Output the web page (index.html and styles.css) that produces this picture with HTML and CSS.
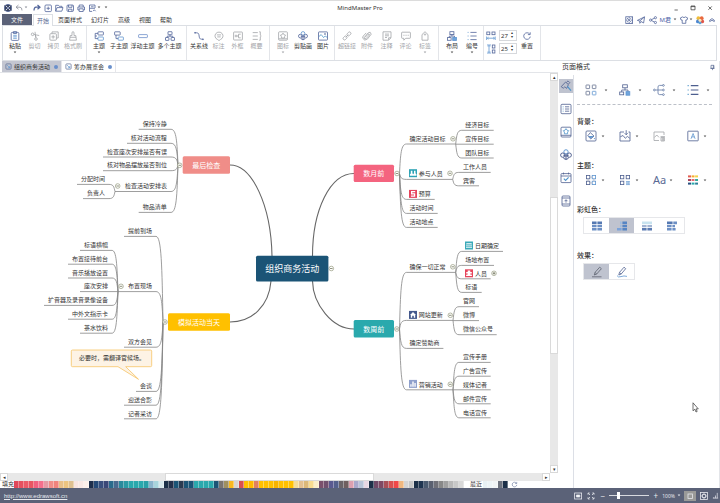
FILE: index.html
```html
<!DOCTYPE html>
<html lang="zh-CN">
<head>
<meta charset="utf-8">
<title>MindMaster Pro</title>
<link rel="stylesheet" href="styles.css">
</head>
<body>
<svg class="sprite" aria-hidden="true">
  <symbol id="logo" viewBox="0 0 10 10"><circle cx="5" cy="5" r="3.6" fill="#39435c"/><path d="M3 3L7 7M7 3L3 7" stroke="#fff" stroke-width=".8"/><circle cx="5" cy="5" r="1" fill="#fff"/><path d="M1 2.5l1 .8M9 2.5l-1 .8M1 7.5l1-.8M9 7.5l-1-.8" stroke="#39435c"/></symbol>
  <symbol id="undo" viewBox="0 0 10 10"><path d="M4.5 2L2 4.2 4.5 6.2M2 4.2H6Q8 4.2 8 7.5"/></symbol>
  <symbol id="redo" viewBox="0 0 10 10"><path d="M5.5 2L8 4.2 5.5 6.2M8 4.2H4Q2 4.2 2 7.5" stroke-width="1.2"/></symbol>
  <symbol id="new" viewBox="0 0 10 10"><rect x="2" y="2" width="6.4" height="6.6" rx="1"/><path d="M5.2 3.6V7M3.5 5.3H6.9"/></symbol>
  <symbol id="open" viewBox="0 0 10 10"><path d="M1.7 8.2V2.3H4.4L5.2 3.3H8V4.6M1.7 8.2L3 4.6H9L7.8 8.2Z"/></symbol>
  <symbol id="save" viewBox="0 0 10 10"><rect x="2" y="2" width="6.5" height="6.4" rx="1"/><path d="M3.5 2V4.3H7V2M3.5 8.4V6.2H7V8.4"/></symbol>
  <symbol id="print" viewBox="0 0 10 10"><path d="M3.2 4V2H7.2V4M3 7H1.9V4H8.5V7H7.4M3.2 5.8H7.2V8.5H3.2Z"/></symbol>
  <symbol id="export" viewBox="0 0 10 10"><path d="M8 5V2H2.5V8.4H5M4 3.8H6.6M2.5 5.3H8M6 8.2L7.3 6.8 8.6 8.2"/></symbol>
  <symbol id="paste" viewBox="0 0 10 10"><rect x="1.2" y="1.4" width="7.6" height="8" rx="1"/><path d="M3.4 .7H6.6V2.4H3.4Z" fill="#9db7dd"/><path d="M3.2 4.3H6.8M3.2 5.8H6.8M3.2 7.3H6.8" stroke="#5f95cf"/></symbol>
  <symbol id="cut" viewBox="0 0 10 10"><circle cx="2.6" cy="3.3" r="1.3"/><circle cx="6" cy="8" r="1.3"/><path d="M3.9 3.5L9.2 4.5M5.8 6.7L5 .8M5.4 4L5.8 6"/></symbol>
  <symbol id="copy" viewBox="0 0 10 10"><path d="M3 2.6V.9H9.2V7H7.6"/><rect x=".9" y="2.7" width="6.5" height="6.5" rx=".8"/><path d="M4.1 4.2V7.7M2.4 5.9H5.9"/></symbol>
  <symbol id="brush" viewBox="0 0 10 10"><path d="M4 4.6V1.3Q5 0 6 1.3V4.6H7.8L8.4 9.2H1.6L2.2 4.6ZM2 6.3H8"/></symbol>
  <symbol id="topic" viewBox="0 0 10 10"><rect x="4" y=".8" width="5.4" height="3.2" rx=".5"/><rect x="4" y="6" width="5.4" height="3.2" rx=".5" stroke="#5f95cf"/><path d="M4 2.4H1.2V7.6H4M1.2 5H3"/></symbol>
  <symbol id="subtopic" viewBox="0 0 10 10"><rect x=".6" y=".8" width="5.6" height="3.3" rx=".5"/><rect x="4.2" y="6" width="5.2" height="3.2" rx=".5" stroke="#5f95cf"/><path d="M2 4.1V7.6H4.2"/></symbol>
  <symbol id="floating" viewBox="0 0 10 10"><rect x=".6" y="3.6" width="8.8" height="3" rx=".6" stroke="#6f8fc9"/></symbol>
  <symbol id="multi" viewBox="0 0 10 10"><rect x="3" y=".7" width="4" height="3" rx=".3"/><rect x=".5" y="6.5" width="3.4" height="2.9" rx=".3"/><rect x="6.1" y="6.5" width="3.4" height="2.9" rx=".3"/><path d="M5 3.7V5.2M2.2 6.5V5.2H7.8V6.5"/></symbol>
  <symbol id="relation" viewBox="0 0 10 10"><path d="M1 1.8H2.7C6.8 1.8 3.5 8.2 7.5 8.2H9"/><circle cx="1" cy="1.8" r=".5"/><circle cx="9" cy="8.3" r=".5"/></symbol>
  <symbol id="callout" viewBox="0 0 10 10"><path d="M3.4 8.4A4 3.8 0 1 1 6.6 8.4L5 9.6Z"/><path d="M2.9 3.9H7.1M3.3 5.9H6.7"/></symbol>
  <symbol id="boundary" viewBox="0 0 10 10"><rect x=".6" y="1" width="8.8" height="8" rx=".6"/><path d="M7.7 3.2H5.5V6.8H7.7M5.5 5H4"/><circle cx="3" cy="5" r=".9"/></symbol>
  <symbol id="summary" viewBox="0 0 10 10"><path d="M.7 1.6H5.8M.7 5H5.8M.7 8.4H5.8M7.2 .8H8.3V4.2L9.2 5 8.3 5.8V9.2H7.2"/></symbol>
  <symbol id="mark" viewBox="0 0 10 10"><rect x=".6" y=".8" width="8.8" height="8.4" rx=".8"/><path d="M5 2.1L6 3.8 7.6 4.2 6.6 5.6 6.6 7H3.4L3.4 5.6 2.4 4.2 4 3.8ZM.8 7.8H9.2"/></symbol>
  <symbol id="clip" viewBox="0 0 10 10"><circle cx="5" cy="2.4" r="1.8" stroke="#5f95cf"/><circle cx="2.3" cy="5.1" r="1.8"/><circle cx="7.7" cy="5.1" r="1.8"/><path d="M5 3.8V9.2M5 6L2.7 5.1M5 6L7.3 5.1M5 8.5Q3 8.8 3 7M5 8.5Q7 8.8 7 7"/></symbol>
  <symbol id="picture" viewBox="0 0 10 10"><rect x=".5" y=".9" width="9" height="8.2" rx=".6"/><path d="M.8 5.6L3.2 3.6 5.6 6.6 7.2 5 9.2 6.4" stroke="#4f94c9"/><circle cx="7" cy="3" r=".5"/></symbol>
  <symbol id="link" viewBox="0 0 10 10"><rect x="4.8" y="1.5" width="4.3" height="2.8" rx="1.3" transform="rotate(-45 7 2.9)"/><rect x=".9" y="5.6" width="4.3" height="2.8" rx="1.3" transform="rotate(-45 3 7)"/><path d="M3.6 6.4L6.4 3.6"/></symbol>
  <symbol id="attach" viewBox="0 0 10 10"><path d="M3 6.4L6.2 3.2Q7.4 2.4 7.4 4L4.2 7.5Q2.2 8.8 2 6.8L6 2Q8.6-.2 9.2 3.2L5.4 8.1Q2.4 10.5.8 7.3Q.4 6 1.3 5L4.2 1.9"/></symbol>
  <symbol id="note" viewBox="0 0 10 10"><path d="M1 .8H9V6.8L6.6 9.2H1ZM3 3.1H7M3 4.8H7M3 6.5H5M6.6 9V6.8H9"/></symbol>
  <symbol id="comment" viewBox="0 0 10 10"><path d="M1.2 1.2H8.8Q9.4 1.2 9.4 2V6.6Q9.4 7.3 8.8 7.3H4.8L2.8 9.2V7.3H1.2Q.6 7.3.6 6.6V2Q.6 1.2 1.2 1.2Z"/><path d="M2.5 4.3H3.4M4.6 4.3H5.5M6.7 4.3H7.6" stroke-width="1.1"/></symbol>
  <symbol id="tag" viewBox="0 0 10 10"><path d="M2 9.2V3.6L5 .7 8 3.6V9.2Z"/><circle cx="5" cy="3.5" r=".7"/></symbol>
  <symbol id="layout" viewBox="0 0 10 10"><rect x="2.9" y=".7" width="4" height="2.9"/><rect x=".5" y="6.6" width="3.6" height="2.7"/><path d="M4.9 3.6V5.1M2.3 6.6V5.1H7.5V6.6"/><rect x="5.7" y="6.4" width="3.7" height="3.1" fill="#6fa4dc" stroke="#5f95cf"/></symbol>
  <symbol id="number" viewBox="0 0 10 10"><path d="M3.4 1.4H9.6M3.4 5H9.6M3.4 8.6H9.6"/><path d="M.6 1.4H1.6M.6 5H1.6M.6 8.6H1.6" stroke="#5f95cf"/></symbol>
  <symbol id="hgap" viewBox="0 0 10 10"><rect x=".8" y="1" width="3" height="2.7"/><rect x="6" y="1" width="3" height="2.7"/><path d="M.6 5.5V9M9.2 5.5V9M1.3 7.2H8.5M2.5 6.2L1.3 7.2 2.5 8.2M7.3 6.2L8.5 7.2 7.3 8.2" stroke="#5f95cf"/></symbol>
  <symbol id="vgap" viewBox="0 0 10 10"><path d="M1 1H5M1 9H5M3 1.5V8.5M2 2.6L3 1.5 4 2.6M2 7.4L3 8.5 4 7.4" stroke="#5f95cf"/><rect x="6.3" y="1" width="2.6" height="3"/><rect x="6.3" y="6" width="2.6" height="3"/></symbol>
  <symbol id="reset" viewBox="0 0 10 10"><path d="M7.7 3.1A3.3 3.3 0 1 0 8.3 5.6M8.2 1.3V3.6H5.9"/></symbol>
  <symbol id="down" viewBox="0 0 4 3"><path d="M.7 .6H3.3L2 2.3Z" fill="currentColor" stroke="none"/></symbol>
  <symbol id="grid" viewBox="0 0 12 12"><g stroke="#65718f"><rect x="1" y="1" width="3.6" height="3.6" rx=".4"/><rect x="7.3" y="1" width="3.6" height="3.6" rx=".4"/><rect x="1" y="7.3" width="3.6" height="3.6" rx=".4"/></g><rect x="7.3" y="7.3" width="3.6" height="3.6" rx=".4" stroke="#5f95cf"/></symbol>
  <symbol id="theme" viewBox="0 0 12 12"><rect x="1.4" y="1.4" width="3.4" height="3.4"/><rect x="7.2" y="1.4" width="3.4" height="3.4" stroke="#5f95cf"/><rect x="1.4" y="7.2" width="3.4" height="3.4"/><rect x="7.2" y="7.2" width="3.4" height="3.4" stroke="#5f95cf"/><path d="M3.1 4.8V7.2M4.8 3.1H7.2M4.8 8.9H7.2M8.9 4.8V7.2" stroke="#a6adbf"/></symbol>
  <symbol id="theme2" viewBox="0 0 12 12"><rect x="1.4" y="1.4" width="3.4" height="3.4"/><rect x="7.2" y="1.4" width="3.4" height="3.4"/><rect x="1.4" y="7.2" width="3.4" height="3.4"/><path d="M7 7.6H11M7 9.1H11M7 10.6H11M8 7V11M9.8 7V11" stroke="#5f95cf" stroke-width=".6"/></symbol>
  <symbol id="tree" viewBox="0 0 12 12"><rect x="3.7" y=".8" width="4.6" height="3"/><rect x=".7" y="8" width="4" height="2.8"/><path d="M6 3.8V6M2.7 8V6H9V7.6"/><rect x="7" y="7.6" width="3.8" height="3.6" fill="#6fa4dc" stroke="#5f95cf"/></symbol>
  <symbol id="branch" viewBox="0 0 12 12"><g stroke="#6278a4"><circle cx="1.4" cy="6" r=".9"/><path d="M2.3 6H9.4M9.4 1.4H6.5Q5 1.4 5 3V9Q5 10.6 6.5 10.6H9.4"/><circle cx="10.4" cy="1.4" r=".9"/><circle cx="10.4" cy="6" r=".9"/><circle cx="10.4" cy="10.6" r=".9"/></g></symbol>
  <symbol id="bullets" viewBox="0 0 12 12"><path d="M3.8 1.6H11.4M3.8 6H11.4M3.8 10.4H11.4" stroke-width="1.1"/><path d="M.6 1.6H1.7M.6 6H1.7M.6 10.4H1.7" stroke="#4f94c9" stroke-width="1.2"/></symbol>
  <symbol id="fill" viewBox="0 0 12 12"><rect x="1" y="1" width="10" height="10" rx="1"/><path d="M5.3 2.6L9 6.1 5.8 8.9 2.7 5.9Z"/><path d="M3.2 6H8.8L5.8 8.6Z" fill="#5f95cf" stroke="none"/><circle cx="9.4" cy="8.6" r=".6" fill="#5f95cf" stroke="none"/></symbol>
  <symbol id="bgimage" viewBox="0 0 12 12"><path d="M5 2H1V11H11V2H9.5M1.3 6.8L4 5.5 6.3 8.3 8.3 6.4 10.7 8.2"/><path d="M7.2 .2V4.6M5.7 3.2L7.2 4.8 8.7 3.2"/></symbol>
  <symbol id="bgremove" viewBox="0 0 12 12"><path d="M11 5V2H1V10.5H6M1.3 7.5L3.8 5 6 7.4M7.5 6.7H12M8 7.3H11.4V11H8ZM9.3 7.5V10.8M10.4 7.5V10.8"/></symbol>
  <symbol id="watermark" viewBox="0 0 12 12"><rect x=".8" y="1.2" width="10.4" height="9.6" rx=".4"/><path d="M4 8.8L6.1 3.5 8.1 8.8M4.8 6.9H7.4" stroke="#5f95cf"/></symbol>
  <symbol id="palette" viewBox="0 0 12 12"><g stroke="none"><path d="M1 1.4H4V3.4H1Z" fill="#e45e50"/><path d="M4.6 1.4H7.5V3.4H4.6Z" fill="#f7ab2c"/><path d="M8.1 1.4H11V3.4H8.1Z" fill="#f2d348"/><path d="M1 5H4V7H1Z" fill="#a8455e"/><path d="M4.6 5H7.5V7H4.6Z" fill="#ea6a72"/><path d="M8.1 5H11V7H8.1Z" fill="#35a99b"/><path d="M1 8.6H4V10.6H1Z" fill="#285180"/><path d="M4.6 8.6H7.5V10.6H4.6Z" fill="#2aa9ad"/><path d="M8.1 8.6H11V10.6H8.1Z" fill="#2b7f99"/></g></symbol>
  <symbol id="roller" viewBox="0 0 12 12"><path d="M1.2 6.7L5.6 2 8.4 4.6 6.7 8.4 4.8 6.8 3.3 8.2ZM6.5 2.3L8 .9 9.8 2.7 8.3 4.2"/><path d="M7.4 6.3L11 10.6" stroke="#4f94c9" stroke-width="1.3"/></symbol>
  <symbol id="outline" viewBox="0 0 12 12"><rect x="1" y="1.3" width="10" height="9.4" rx="1"/><path d="M5 3.8H9.2M5 6H9.2M5 8.2H9.2"/><path d="M2.7 3.8H3.6M2.7 6H3.6M2.7 8.2H3.6" stroke="#4f94c9"/></symbol>
  <symbol id="starbox" viewBox="0 0 12 12"><rect x="1" y="1.2" width="10" height="9.8" rx="1"/><path d="M1 9.3H11"/><path d="M6 2.6L7 4.2 8.7 4.7 7.6 6 7.6 7.8H4.4L4.4 6 3.3 4.7 5 4.2Z" stroke="#4f94c9"/></symbol>
  <symbol id="calendar" viewBox="0 0 12 12"><rect x="1" y="1.6" width="10" height="9" rx=".8"/><path d="M1 4H11M3.5 .6V2.4M8.5 .6V2.4"/><path d="M3.8 6.7L5.6 8.5 8.6 5.3" stroke="#4f94c9" stroke-width="1.1"/></symbol>
  <symbol id="history" viewBox="0 0 12 12"><rect x="2" y="1" width="8" height="10" rx="1"/><path d="M2 3H10M2 9H10M4.5 6.2L6 4.7 7.5 6.2M6 5V7.6"/></symbol>
  <symbol id="rb1" viewBox="0 0 12 12"><g stroke="none" fill="#6c8fc4"><path d="M1 1.5H5.6V4.2H1ZM6.4 1.5H11V4.2H6.4Z" fill="#5579b2"/><path d="M1 4.9H5.6V7.3H1ZM6.4 4.9H11V7.3H6.4ZM1 8H5.6V10.5H1ZM6.4 8H11V10.5H6.4Z"/></g></symbol>
  <symbol id="rb2" viewBox="0 0 12 12"><g stroke="none"><path d="M1 8H5.6V10.5H1Z" fill="#7ba3da"/><path d="M4 1.5H5.6V4.2H4ZM4 4.9H5.6V7.3H4Z" fill="#9cbbe0"/><path d="M6.4 1.5H11V4.2H6.4ZM6.4 4.9H11V7.3H6.4ZM6.4 8H11V10.5H6.4Z" fill="#5585c4"/></g></symbol>
  <symbol id="rb3" viewBox="0 0 12 12"><g stroke="none"><path d="M1 1.5H11V4.2H1Z" fill="#c8e3ef"/><path d="M1 4.9H5.6V7.3H1ZM6.4 4.9H11V7.3H6.4Z" fill="#a2b4d2"/><path d="M1 8H5.6V10.5H1ZM6.4 8H11V10.5H6.4Z" fill="#5b7bb2"/></g></symbol>
  <symbol id="rb4" viewBox="0 0 12 12"><g stroke="none" fill="#6c8fc4"><path d="M1 1.5H6.6V4.2H1Z" fill="#5579b2"/><path d="M7.3 1.5H11V4.2H7.3ZM1 4.9H5.6V7.3H1ZM6.4 4.9H9V7.3H6.4Z"/><path d="M1 8H5.6V10.5H1ZM6.4 8H9.6V10.5H6.4Z"/></g></symbol>
  <symbol id="pen" viewBox="0 0 12 12"><path d="M3.3 9L4 6.4 8.7 1.2 10.4 2.7 5.7 8ZM4 6.4L5.7 8" stroke="#5d6270"/><path d="M1 10.8H10.5" stroke="#5d6270"/></symbol>
  <symbol id="pencil" viewBox="0 0 12 12"><path d="M2.8 9L3.5 6.4 8 1.2 9.7 2.7 5.2 8ZM3.5 6.4L5.2 8"/><path d="M1 9.6Q2 11.8 5 10.6T11 10.4" stroke="#5f95cf"/></symbol>
  <symbol id="full" viewBox="0 0 10 10"><rect x="1.8" y="1.8" width="6.8" height="6.6"/><path d="M3 3L7.4 7.2M7.4 3L3 7.2M5.2 2V3.5M5.2 6.8V8.4M2 5.1H3.5M7 5.1H8.6"/></symbol>
  <symbol id="send" viewBox="0 0 10 10"><path d="M1.4 5.4L8.6 1.8 7.6 8 5 6.5 3.8 8.3V6L8.2 2.2M1.4 5.4L3.8 6"/></symbol>
  <symbol id="share" viewBox="0 0 10 10"><circle cx="2.6" cy="5.1" r="1.1"/><circle cx="7.4" cy="2.7" r="1.1"/><circle cx="7.4" cy="7.5" r="1.1"/><path d="M3.6 4.6L6.4 3.2M3.6 5.6L6.4 7"/></symbol>
  <symbol id="shirt" viewBox="0 0 10 10"><path d="M3.6 1.9L1.4 2.9 2 5H3.2V8.3H6.8V5H8L8.6 2.9 6.4 1.9Q5 3.4 3.6 1.9Z"/></symbol>
  <symbol id="flower" viewBox="0 0 10 10"><g stroke="none"><circle cx="3.4" cy="3.2" r="1.9" fill="#f0bd3a"/><circle cx="6.7" cy="3.2" r="1.9" fill="#ea6a3d"/><circle cx="2.9" cy="6.4" r="1.9" fill="#4d86d0"/><circle cx="7.2" cy="6.4" r="1.9" fill="#e2574a"/><circle cx="5" cy="7.8" r="1.5" fill="#61a5d8"/><circle cx="5" cy="5.2" r="1.5" fill="#fbe8ba"/></g></symbol>
  <symbol id="chev" viewBox="0 0 10 10"><path d="M2.7 6.5V5.2L5 3.6 7.3 5.2V6.5L5 5.3Z"/></symbol>
  <symbol id="min" viewBox="0 0 10 10"><path d="M3.5 7H6.8"/></symbol>
  <symbol id="max" viewBox="0 0 10 10"><path d="M3 3H7V6.8H3ZM3 3.6H7"/></symbol>
  <symbol id="close" viewBox="0 0 10 10"><path d="M3.4 3.4L6.8 6.8M6.8 3.4L3.4 6.8"/></symbol>
  <symbol id="doc" viewBox="0 0 8 8"><rect x="1" y="1" width="6" height="6" rx="1"/><path d="M2.2 2.3L5.4 5.5M5.4 3.4V5.5H3.2" stroke="#5f95cf"/></symbol>
  <symbol id="pin" viewBox="0 0 8 8"><path d="M2.3 1.5H5.6V5H2.3ZM5 1.5V5M1.5 5H6.3M4 5V7"/></symbol>
  <symbol id="slide" viewBox="0 0 10 10"><rect x="1.6" y="2" width="7" height="6"/><path d="M3.4 4H6.8V6H3.4Z" fill="#fff"/></symbol>
  <symbol id="expand" viewBox="0 0 10 10"><path d="M2 3.7V2H3.7M6.3 2H8V3.7M8 6.3V8H6.3M3.7 8H2V6.3M2.2 2.2L4 4M7.8 2.2L6 4M2.2 7.8L4 6M7.8 7.8L6 6"/></symbol>
  <symbol id="page" viewBox="0 0 10 10"><rect x="3" y="3" width="4.4" height="4.4"/></symbol>
  <symbol id="fit" viewBox="0 0 10 10"><rect x="1.5" y="1.5" width="7" height="7"/><path d="M5 1.5V8.5M1.5 5H8.5"/><rect x="3.4" y="3.6" width="3.2" height="2.8" fill="#5b6278"/></symbol>
  <symbol id="grip" viewBox="0 0 8 8"><path d="M6 1V7M4 4V7M2 6V7M1 7H7"/></symbol>
</svg>

<div class="app">
  <header>
    <div class="titlebar">
      <div class="quick">
        <svg class="ic"><use href="#logo"/></svg>
        <button class="mini" aria-label="撤销"><svg class="ic gray"><use href="#undo"/></svg></button>
        <svg class="dd gray"><use href="#down"/></svg>
        <button class="mini" aria-label="重做"><svg class="ic"><use href="#redo"/></svg></button>
        <button class="mini" aria-label="新建"><svg class="ic"><use href="#new"/></svg></button>
        <button class="mini" aria-label="打开"><svg class="ic"><use href="#open"/></svg></button>
        <button class="mini" aria-label="保存"><svg class="ic"><use href="#save"/></svg></button>
        <button class="mini" aria-label="打印"><svg class="ic"><use href="#print"/></svg></button>
        <button class="mini" aria-label="导出"><svg class="ic"><use href="#export"/></svg></button>
        <svg class="dd"><use href="#down"/></svg>
        <svg class="dd"><use href="#down"/></svg>
      </div>
      <h1>MindMaster Pro</h1>
      <div class="winctl">
        <button aria-label="最小化"><svg class="ic dark"><use href="#min"/></svg></button>
        <button aria-label="最大化"><svg class="ic dark"><use href="#max"/></svg></button>
        <button aria-label="关闭"><svg class="ic dark"><use href="#close"/></svg></button>
      </div>
    </div>
    <div class="menubar">
      <nav>
        <button class="file">文件</button>
        <button class="current">开始</button>
        <button>页面样式</button>
        <button>幻灯片</button>
        <button>高级</button>
        <button>视图</button>
        <button>帮助</button>
      </nav>
      <div class="account">
        <button aria-label="全屏"><svg class="ic"><use href="#full"/></svg></button>
        <button aria-label="发送"><svg class="ic"><use href="#send"/></svg></button>
        <button aria-label="分享"><svg class="ic"><use href="#share"/></svg></button>
        <button class="user">M君<svg class="dd"><use href="#down"/></svg></button>
        <button aria-label="皮肤"><svg class="ic"><use href="#shirt"/></svg><svg class="dd"><use href="#down"/></svg></button>
        <button aria-label="社区"><svg class="ic"><use href="#flower"/></svg></button>
        <button aria-label="折叠"><svg class="ic"><use href="#chev"/></svg></button>
      </div>
    </div>
    <div class="ribbon">
      <div class="group">
        <button><svg class="ic"><use href="#paste"/></svg>粘贴<svg class="dd"><use href="#down"/></svg></button>
        <button class="off narrow"><svg class="ic"><use href="#cut"/></svg>剪切</button>
        <button class="off narrow"><svg class="ic"><use href="#copy"/></svg>拷贝</button>
        <button class="off"><svg class="ic"><use href="#brush"/></svg>格式刷</button>
      </div>
      <div class="group">
        <button><svg class="ic"><use href="#topic"/></svg>主题<svg class="dd"><use href="#down"/></svg></button>
        <button><svg class="ic"><use href="#subtopic"/></svg>子主题</button>
        <button class="wide"><svg class="ic"><use href="#floating"/></svg>浮动主题</button>
        <button class="wide"><svg class="ic"><use href="#multi"/></svg>多个主题</button>
      </div>
      <div class="group">
        <button><svg class="ic"><use href="#relation"/></svg>关系线</button>
        <button class="off narrow"><svg class="ic"><use href="#callout"/></svg>标注</button>
        <button class="off narrow"><svg class="ic"><use href="#boundary"/></svg>外框</button>
        <button class="off narrow"><svg class="ic"><use href="#summary"/></svg>概要</button>
      </div>
      <div class="group tight">
        <button class="off"><svg class="ic"><use href="#mark"/></svg>图标<svg class="dd"><use href="#down"/></svg></button>
        <button><svg class="ic"><use href="#clip"/></svg>剪贴画</button>
        <button><svg class="ic"><use href="#picture"/></svg>图片</button>
      </div>
      <div class="group">
        <button class="off"><svg class="ic"><use href="#link"/></svg>超链接</button>
        <button class="off"><svg class="ic"><use href="#attach"/></svg>附件</button>
        <button class="off narrow"><svg class="ic"><use href="#note"/></svg>注释</button>
        <button class="off narrow"><svg class="ic"><use href="#comment"/></svg>评论</button>
        <button class="off"><svg class="ic"><use href="#tag"/></svg>标签<svg class="dd"><use href="#down"/></svg></button>
      </div>
      <div class="group tight">
        <button><svg class="ic"><use href="#layout"/></svg>布局<svg class="dd"><use href="#down"/></svg></button>
        <button><svg class="ic"><use href="#number"/></svg>编号<svg class="dd"><use href="#down"/></svg></button>
      </div>
      <div class="group">
        <div class="spins">
          <label><svg class="ic"><use href="#hgap"/></svg><span class="spin"><input value="27" aria-label="水平间距"><span>▴<br>▾</span></span></label>
          <label><svg class="ic"><use href="#vgap"/></svg><span class="spin"><input value="25" aria-label="垂直间距"><span>▴<br>▾</span></span></label>
        </div>
        <button><svg class="ic"><use href="#reset"/></svg>重置</button>
      </div>
    </div>
  </header>

  <div class="workspace">
    <main>
      <div class="doctabs">
        <button class="active"><svg class="doc"><use href="#doc"/></svg>组织商务活动<i></i></button>
        <button><svg class="doc"><use href="#doc"/></svg>筹办展览会<i></i></button>
      </div>
      <div class="stage">
        <div class="canvas"><svg id="map" width="549" height="400" viewBox="0 73 549 400" role="img" aria-label="组织商务活动"></svg></div>
        <div class="vbar"><button aria-label="上">▴</button><span class="t1"></span><span class="thumb"></span><span class="t2"></span><button aria-label="下">▾</button></div>
        <div class="hbar"><button aria-label="左">◂</button><span class="t1"></span><span class="thumb"></span><span class="t2"></span><button aria-label="右">▸</button></div>
      </div>
      <div class="colors">
        <span class="cap">填充</span><div id="swatches"></div>
        <span class="cap recent">最近</span><div id="recent"></div>
        <button aria-label="更多颜色"><svg class="doc"><use href="#reset"/></svg></button>
      </div>
    </main>

    <aside>
      <div class="phead"><h2>页面格式</h2><button aria-label="固定"><svg class="doc"><use href="#pin"/></svg></button></div>
      <div class="pmain">
        <div class="side">
          <button class="on" aria-label="页面格式"><svg class="lg"><use href="#roller"/></svg></button>
          <button aria-label="大纲"><svg class="lg"><use href="#outline"/></svg></button>
          <button aria-label="图标"><svg class="lg"><use href="#starbox"/></svg></button>
          <button aria-label="剪贴画"><svg class="lg"><use href="#clip"/></svg></button>
          <button aria-label="任务"><svg class="lg"><use href="#calendar"/></svg></button>
          <button aria-label="历史"><svg class="lg"><use href="#history"/></svg></button>
        </div>
        <div class="pbody">
          <div class="tools first">
            <button aria-label="布局"><svg class="lg"><use href="#grid"/></svg><svg class="dd"><use href="#down"/></svg></button>
            <button aria-label="结构"><svg class="lg"><use href="#tree"/></svg><svg class="dd"><use href="#down"/></svg></button>
            <button aria-label="连线"><svg class="lg"><use href="#branch"/></svg><svg class="dd"><use href="#down"/></svg></button>
            <button aria-label="编号"><svg class="lg"><use href="#bullets"/></svg><svg class="dd"><use href="#down"/></svg></button>
          </div>
          <h3>背景：</h3>
          <div class="tools">
            <button aria-label="填充"><svg class="lg"><use href="#fill"/></svg><svg class="dd"><use href="#down"/></svg></button>
            <button aria-label="背景图片"><svg class="lg"><use href="#bgimage"/></svg><svg class="dd"><use href="#down"/></svg></button>
            <button class="off" aria-label="移除背景"><svg class="lg"><use href="#bgremove"/></svg></button>
            <button aria-label="水印"><svg class="lg"><use href="#watermark"/></svg><svg class="dd"><use href="#down"/></svg></button>
          </div>
          <h3>主题：</h3>
          <div class="tools">
            <button aria-label="主题"><svg class="lg"><use href="#theme"/></svg><svg class="dd"><use href="#down"/></svg></button>
            <button aria-label="主题样式"><svg class="lg"><use href="#theme2"/></svg><svg class="dd"><use href="#down"/></svg></button>
            <button class="font">Aa<svg class="dd"><use href="#down"/></svg></button>
            <button aria-label="颜色"><svg class="lg"><use href="#palette"/></svg><svg class="dd"><use href="#down"/></svg></button>
          </div>
          <h3>彩虹色：</h3>
          <div class="seg">
            <button aria-label="彩虹色 1"><svg class="lg"><use href="#rb1"/></svg></button>
            <button class="on" aria-label="彩虹色 2"><svg class="lg"><use href="#rb2"/></svg></button>
            <button aria-label="彩虹色 3"><svg class="lg"><use href="#rb3"/></svg></button>
            <button aria-label="彩虹色 4"><svg class="lg"><use href="#rb4"/></svg></button>
          </div>
          <h3>效果：</h3>
          <div class="seg">
            <button class="on" aria-label="直线"><svg class="lg"><use href="#pen"/></svg></button>
            <button aria-label="手绘"><svg class="lg"><use href="#pencil"/></svg></button>
          </div>
          <svg class="cursor" viewBox="0 0 7 11"><path d="M1 .8V8.8L2.8 7.2 4 10 5.2 9.4 4 6.9H6.3Z" fill="#fff" stroke="#333" stroke-width=".7"/></svg>
        </div>
      </div>
    </aside>
  </div>

  <footer>
    <a href="http://www.edrawsoft.cn">http://www.edrawsoft.cn</a>
    <div class="zoom">
      <button aria-label="演示"><svg class="ic"><use href="#slide"/></svg></button>
      <button aria-label="全屏"><svg class="ic"><use href="#expand"/></svg></button>
      <button class="step">−</button>
      <input type="range" min="0" max="100" value="22" aria-label="缩放">
      <button class="step">+</button>
      <button class="pct">100%<svg class="dd"><use href="#down"/></svg></button>
      <button class="on" aria-label="页面"><svg class="ic"><use href="#page"/></svg></button>
      <button aria-label="适合窗口"><svg class="ic"><use href="#fit"/></svg></button>
      <svg class="doc"><use href="#grip"/></svg>
    </div>
  </footer>
</div>
<script src="map.js"></script>
</body>
</html>
```
FILE: styles.css
```css
* { box-sizing: border-box; }
body {
  margin: 0;
  font: 6px/8px "Noto Sans", "Noto Sans CJK SC", sans-serif;
  color: #333;
  background: #fff;
}
.sprite { position: absolute; width: 0; height: 0; }
.app { min-height: 100vh; display: flex; flex-direction: column; border-top: 1px solid #dcdcdc; }
button { border: 0; margin: 0; padding: 0; background: none; font: inherit; color: inherit; display: flex; align-items: center; justify-content: center; }
h1, h2, h3 { margin: 0; font-weight: 400; }
svg { fill: none; stroke: currentColor; stroke-width: .8; flex: none; display: block; }
.ic { width: 10px; height: 10px; color: #52659a; }
.lg { width: 12px; height: 12px; color: #4e5f8f; }
.doc { width: 7px; height: 7px; color: #5a6a94; }
.dd { width: 4px; height: 3px; color: #555; }
.gray { color: #8b8f99; }
.dark { color: #444; }

.titlebar { height: 13px; display: grid; grid-template-columns: 1fr auto 1fr; align-items: center; }
.quick { display: flex; align-items: center; padding-left: 3px; }
.quick .mini { width: 11px; }
.quick > .dd { margin-right: 3px; }
.titlebar h1 { font-size: 6px; line-height: 8px; }
.winctl { display: flex; justify-content: flex-end; gap: 7px; padding-right: 5px; }

.menubar { height: 11px; display: flex; justify-content: space-between; padding: 0 3px 0 2px; }
nav { display: flex; gap: 1px; }
nav button { padding: 0 4px; height: 12px; }
nav .file { width: 30px; height: 11px; background: #5b6278; color: #fff; }
nav .current { border: 1px solid #dcdfe4; border-bottom: 0; background: #fff; color: #5a6a94; width: 20px; padding: 0; position: relative; }
.account { display: flex; align-items: center; gap: 2px; }
.account .user { color: #4a62a8; font-size: 6px; gap: 2px; }

.ribbon { height: 36px; margin: 0 3px 0 2px; border: 1px solid #dcdfe4; display: flex; }
.group { display: flex; padding: 4px 3px 2px 2px; position: relative; border-right: 1px solid #e3e5e9; }
.group.tight { padding-left: 3px; padding-right: 1px; }
.group button { width: 20px; flex-direction: column; justify-content: flex-start; gap: 1px; white-space: nowrap; }
.group .narrow { width: 19px; }
.group .wide { width: 27px; }
.group button .ic { margin-top: 1px; }
.off, .off svg { color: #a2a4a8; }
.spins { display: flex; flex-direction: column; gap: 2px; }
.spins label { display: flex; align-items: center; gap: 3px; }
.spin { display: flex; width: 18px; height: 11px; border: 1px solid #d6d8dc; }
.spin input { width: 10px; border: 0; padding: 0 0 0 1px; font: inherit; color: #333; background: none; outline: 0; }
.spin span { font-size: 4px; line-height: 4px; padding-left: 1px; }

.workspace { flex: 1; display: flex; }
main { flex: 1; min-width: 0; display: flex; flex-direction: column; }
.doctabs { height: 12px; display: flex; padding-left: 2px; border-bottom: 1px solid #e3e5e9; }
.doctabs button { gap: 2px; padding: 0 3px; border-right: 1px solid #e6e6ea; }
.doctabs .active { background: #c3c6d1; }
.doctabs i { width: 4px; height: 4px; border-radius: 50%; background: #6a90cc; margin-left: 2px; }
.stage { flex: 1; display: grid; grid-template-columns: 1fr 8px; grid-template-rows: 1fr 8px; }
.canvas { overflow: hidden; min-width: 0; }
#map { stroke: none; font-family: "Noto Sans CJK SC", sans-serif; font-size: 6px; }
#map .line { fill: none; stroke: #858585; stroke-width: .8; }
#map .main { fill: none; stroke: #666; stroke-width: 1.1; }
#map text { fill: #333; }
#map .head { fill: #fff; font-size: 7px; text-anchor: middle; }
#map .root { fill: #fff; font-size: 9px; text-anchor: middle; }
#map .toggle { fill: #fff; stroke: #84896a; stroke-width: .6; }
#map .sign { stroke: #5e6346; stroke-width: .7; }
#map .note { fill: #fdf3e5; stroke: #f6c465; stroke-width: .8; }
.vbar, .hbar { display: flex; background: #e8e8e8; }
.vbar { flex-direction: column; }
.vbar button, .hbar button { width: 8px; height: 8px; background: #fff; border: 1px solid #d8d8d8; font-size: 5px; line-height: 5px; }
.vbar .t1 { flex: 117; }
.vbar .t2 { flex: 112; }
.vbar .thumb { flex: 155; background: #fff; border: 1px solid #dadada; }
.hbar .t1 { flex: 157; }
.hbar .t2 { flex: 168; }
.hbar .thumb { flex: 207; background: #fff; border: 1px solid #dadada; }
.colors { display: flex; align-items: center; height: 7px; overflow: hidden; padding-left: 2px; line-height: 7px; }
.colors .cap { width: 12px; white-space: nowrap; }
.colors .recent { margin-left: 6px; width: 13px; }
#swatches, #recent { display: flex; height: 7px; }
#swatches i, #recent i { width: 5px; border-right: 1px solid rgba(255, 255, 255, .35); }
.colors button { margin-left: 3px; }

aside { width: 162px; flex: none; display: flex; flex-direction: column; border-right: 1px solid #e3e5e9; }
.phead { height: 14px; padding: 0 3px 2px 4px; display: flex; justify-content: space-between; align-items: center; }
.phead h2 { font-size: 7px; line-height: 10px; }
.pmain { flex: 1; display: flex; }
.side { width: 16px; flex: none; padding: 4px 0 0 1px; border-right: 1px solid #dcdfe6; display: flex; flex-direction: column; gap: 9px; }
.side button { height: 14px; }
.on { background: #bfc3cf; }
.pbody { flex: 1; min-width: 0; position: relative; padding: 8px 7px 0 3px; }
.tools { display: grid; grid-template-columns: repeat(4, 34px); height: 14px; padding-left: 8px; }
.tools button { justify-content: flex-start; gap: 4px; }
.tools.first { height: 22px; padding-bottom: 7px; border-bottom: 1px dashed #bcc0c8; }
.tools.first button { gap: 7px; }
.tools .font { font-size: 11px; color: #5a6a94; gap: 3px; }
.pbody h3 { line-height: 8px; margin: 18px 0 4px; font-weight: 500; }
.pbody .first + h3 { margin: 12px 0 4px; }
.pbody .seg + h3 { margin-top: 17px; }
.seg { display: flex; width: max-content; border: 1px solid #e6e7ea; margin-left: 6px; }
.seg button { width: 25px; height: 15px; }
.cursor { position: absolute; right: 20px; top: 327px; width: 7px; height: 11px; }

footer { height: 15px; background: #5b6278; color: #e6e8ee; display: flex; align-items: center; justify-content: space-between; padding: 0 1px 0 4px; }
footer a { color: inherit; font-family: "Liberation Sans", sans-serif; }
.zoom { display: flex; align-items: center; gap: 3px; }
.zoom svg { color: #e6e8ee; }
.zoom button { min-width: 10px; height: 10px; }
.zoom .step { font-size: 8px; min-width: 7px; }
.zoom .pct { font-size: 5px; gap: 2px; }
.zoom .on { background: #9a9a98; width: 12px; }
.zoom input { appearance: none; width: 40px; height: 8px; margin: 0; background: linear-gradient(#d8dae0, #d8dae0) center / 100% 1px no-repeat; }
.zoom input::-webkit-slider-thumb { appearance: none; width: 3px; height: 7px; background: #fff; }
```
FILE: map.js
```js
const out = [];
const line = d => out.push(`<path class="line" d="${d}"/>`);
const label = (x, y, s) => out.push(`<text x="${x}" y="${y}">${s}</text>`);
const late = [];
const toggle = (x, y, plus) => late.push(`<circle class="toggle" cx="${x}" cy="${y}" r="2.3"/><path class="sign" d="M${x - 1.3} ${y}h2.6${plus ? `M${x} ${y - 1.3}v2.6` : ''}"/>`);

// Joins a spine point to the underline of a topic; dir is -1 to the left, 1 to the right.
function join(px, py, y, dir, far, depth) {
  const d = y - py;
  line(Math.abs(d) < 1
    ? `M${px} ${y}H${far}`
    : `M${px} ${py}C${px + dir} ${py + d * 0.65} ${px + dir * 1.5} ${y} ${px + dir * depth} ${y}H${far}`);
}
function branch(px, py, dir, depth, topics) {
  for (const [s, x, y, far] of topics) {
    join(px, py, y, dir, far, depth);
    label(x, y - 3.3, s);
  }
}

out.push('<path class="main" d="M230 165C252 165 271 205 272 256M354 173.500C330 173.500 312.500 210 312.500 256M230 322C252 322 269 306 271 281M312.500 281C313 304 332 329 354 329"/>');

branch(178, 165, -1, 7, [
  ['保持冷静', 142.7, 129.3, 138.7], ['核对活动流程', 130.7, 143.3, 127],
  ['检查座次安排是否有误', 107, 157, 103], ['核对物品摆放是否到位', 107, 170.7, 103],
  ['检查活动安排表', 125, 191.5, 115], ['物品清单', 142.7, 212.4, 138.7]]);
branch(115, 191.5, -1, 6, [['分配时间', 81, 184.4, 77], ['负责人', 87, 198.6, 83]]);
branch(163, 322, -1, 7, [
  ['提前到场', 128, 236.4, 124], ['布置现场', 128, 291.6, 118], ['双方会见', 128, 347.2, 124],
  ['会谈', 140, 391.4, 136], ['迎送合影', 128, 405.2, 124], ['记者采访', 128, 418.8, 124]]);
branch(118, 291.6, -1, 6, [
  ['标语横幅', 84, 250.4, 80], ['布置接待前台', 72, 264.2, 68], ['音乐播放设置', 72, 278, 68],
  ['座次安排', 84, 291.6, 80], ['扩音器及录音录像设备', 48, 305.4, 44],
  ['中外文指示卡', 72, 319.2, 68], ['茶水饮料', 84, 333.2, 80]]);
branch(399.5, 173.5, 1, 7, [
  ['确定活动目标', 409.5, 144, 455.7], ['参与人员', 418.7, 179.4, 452.7], ['预算', 418.7, 199.4, 434.7],
  ['活动时间', 409.5, 213.4, 437.7], ['活动地点', 409.5, 227.4, 437.7]]);
branch(455.7, 144, 1, 6, [['经济目标', 465.3, 130.3, 493.7], ['宣传目标', 465.3, 144.2, 493.7], ['团队目标', 465.3, 158, 493.7]]);
branch(452.7, 179.4, 1, 6, [['工作人员', 463, 172.4, 490.7], ['宾客', 463, 185.8, 479]]);
branch(399.5, 329, 1, 7, [
  ['确保一切正常', 409.5, 272.4, 455.7], ['网站更新', 418.7, 320.4, 453],
  ['确定赞助商', 409.5, 348.4, 443.4], ['营销活动', 418.7, 389.8, 453]]);
branch(455.7, 272.4, 1, 6, [['日期确定', 475, 251.4, 503], ['场地布置', 465.3, 265.4, 494], ['人员', 475, 278.8, 490.7], ['标语', 465.3, 292.4, 481.7]]);
branch(453, 320.4, 1, 6, [['官网', 463, 306.7, 479], ['微博', 463, 320.6, 479], ['微信公众号', 463, 334.7, 496.7]]);
branch(453, 389.8, 1, 6, [
  ['宣传手册', 463, 362.4, 490.7], ['广告宣传', 463, 376.2, 490.7], ['媒体记者', 463, 389.8, 490.7],
  ['邮件宣传', 463, 403.8, 490.7], ['电话宣传', 463, 417.8, 490.7]]);

[[179.7, 165.3], [117.7, 186], [165, 322], [121, 286.3], [331.3, 268.5], [397, 173.5], [453, 138.8],
 [450, 173.3], [396.8, 329], [452.8, 266.8], [450.3, 315.3], [450.3, 384.3]].forEach(([x, y]) => toggle(x, y));
toggle(494, 273.3, true);

const box = (x, y, w, h, c, s, cls, ty) => late.push(`<rect x="${x}" y="${y}" width="${w}" height="${h}" rx="1.500" fill="${c}"/><text class="${cls}" x="${x + w / 2}" y="${ty}">${s}</text>`);
box(182.7, 156.3, 47.3, 17.4, '#f08d88', '最后检查', 'head', 167.8);
box(168, 313.3, 62, 17.4, '#ffc000', '模拟活动当天', 'head', 324.8);
box(353.7, 164.7, 40.3, 17.4, '#f4647f', '数月前', 'head', 176.1);
box(353.7, 320, 40.3, 17.6, '#2aa9ad', '数周前', 'head', 331.6);
box(256, 255.7, 72.4, 25.7, '#1b5476', '组织商务活动', 'root', 272);

const badge = (x, y, c, d) => late.push(`<rect x="${x}" y="${y}" width="8" height="8" fill="${c}"/><path transform="translate(${x} ${y})" fill="#fff" d="${d}"/>`);
badge(409, 169.2, '#2fa3b5', 'M1.800 1.500h1.600v2.600l.8.900.8-.9V1.500h1.500v2.600l1 1v1.400H.9V5.100l.9-.9Z');
badge(409, 189.9, '#e6455c', 'M2 1.200h4.200v1.200H3.300v1h2.900v3.500H1.900V5.700H5v-1H2Z');
badge(465, 241.5, '#3aa9b8', 'M1.300 1.500h5.400v.8H1.300ZM1.300 3h1.400v1.300H1.300ZM3.300 3h1.400v1.300H3.300ZM5.300 3h1.400v1.300H5.300ZM1.300 5h1.400v1.500H1.300ZM3.300 5h1.400v1.500H3.300ZM5.300 5h1.400v1.500H5.300Z');
badge(465, 269.3, '#e6455c', 'M2.700 1.300h2.600v1.300h1.500v1.600H5.300v.9l1.600.4v1.200H1.100V5.500l1.600-.4v-.9H1.200V2.600h1.500Z');
badge(409, 310.9, '#44588c', 'M4 1.200L7 4H6.200V6.800H4.800V4.900H3.200V6.800H1.800V4H1Z');
badge(409, 379.9, '#8fa0cc', 'M1.300 4.300h1.300v2.500H1.300ZM3.300 1.500h1.400v5.300H3.300ZM5.400 3h1.300v3.800H5.400Z');

late.push('<path class="note" d="M72.500 350H150.500Q151.700 350 151.700 351.200V365.500Q151.700 366.700 150.500 366.700H125.700L138.500 379.300 118 366.700H72.500Q71.300 366.700 71.300 365.500V351.200Q71.300 350 72.500 350Z"/><text x="79" y="360.300">必要时，需翻译官候场。</text>');
document.getElementById('map').innerHTML = out.join('') + late.join('');

const fill = (id, list) => {
  document.getElementById(id).innerHTML = list.trim().split(/\s+/).map(c => `<i style="background:#${c}"></i>`).join('');
};
fill('swatches', `e0485a e5505f ea5a68 e85562 f0607f f5708d e59aa5 f08d88 f0837c e8c088 ecc480 dfc090 f8e4e0 f9e8e4 fdf0ea
1e2f4c 254a78 3a4f7e 3b4878 2a6b8c 4a6a90 2a8a9c 2b99a5 2aa9ad 2aa9ad 2aa9ad 2aa0a8 8ab4cc a8d4dc d8e8ec
1c3048 24304a 1b5476 2a3a50 1b5476 1b5476 2aa9ad 2aa9ad 2aa9ad 2aa9ad 1b5476 7a7470 a09060 f8b820 d8d4d0
d94f50 ffc000 ffb800 e08060 ffc000 ffc000 ffc000 f8b400 ffc000 ffc000 ffc000 f4dc98 e4c090 dcb878 f8dc90 fbeec8
7a506c 70506e 5a5a90 54608c 6a6468 706060 dca0b0 a8a8cc b8c4d8 e8d8e4
1c3048 704a68 7e4a64 a85058 d85050 f04848 f0b880 d4d4d4 c8c8c8 1c3048 1e3450 4a5a70 5a6070 707078 888888 a0a0a0 b8b8b8 c8c8c8 d8d8d8`);
fill('recent', 'e8f1f5 edf4f7 f0f4f6 6e7480 1c3048');
```
